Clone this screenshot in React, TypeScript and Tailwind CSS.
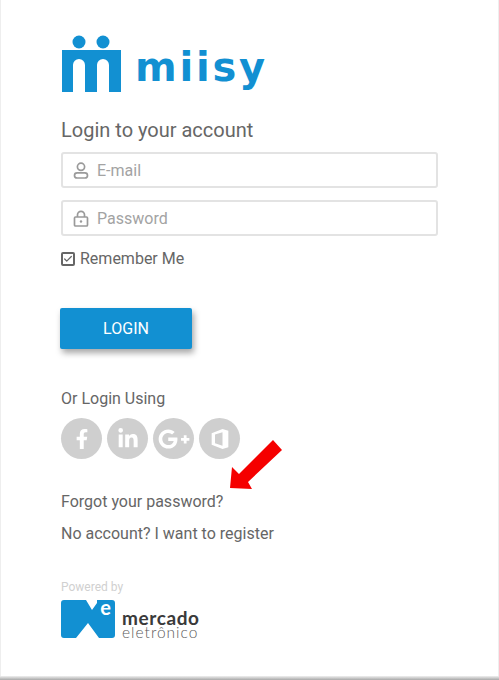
import React from "react";
import { FaFacebookF, FaLinkedinIn, FaGooglePlusG } from "react-icons/fa";
import { Check } from "lucide-react";

const ROBOTO = "font-['Roboto',sans-serif]";

function OfficeIcon() {
  return (
    <svg width="20" height="24" viewBox="0 0 24 26" fill="#fff">
      <path fillRule="evenodd" d="M2 6 15 1 22 3V23L15 25 2 20ZM6 7.5 15 5V21L6 18Z" />
    </svg>
  );
}

function UserIcon() {
  return (
    <svg width="16" height="17" viewBox="0 0 16 17" fill="none" stroke="currentColor" strokeWidth="1.7">
      <circle cx="8" cy="4.8" r="3.6" />
      <rect x="1.5" y="10.8" width="13" height="5.2" rx="2.6" />
    </svg>
  );
}

function LockIcon() {
  return (
    <svg width="16" height="17" viewBox="0 0 16 17" fill="none" stroke="currentColor" strokeWidth="1.7">
      <path d="M4.5 7V4.8a3.5 3.5 0 0 1 7 0V7" />
      <rect x="1.5" y="7" width="13" height="9" rx="1" />
      <circle cx="8" cy="11.5" r="1.2" fill="currentColor" stroke="none" />
    </svg>
  );
}

function MiisyLogo() {
  return (
    <div className="flex items-end h-[57px]">
      <svg width="60" height="57" viewBox="0 0 60 57" className="shrink-0">
        <circle cx="18" cy="7" r="6.5" fill="#1290d2" />
        <circle cx="42" cy="7" r="6.5" fill="#1290d2" />
        <path
          d="M1 15H60V57H48V30a6 6 0 0 0-12 0V57H24V30a6 6 0 0 0-12 0V57H1Z"
          fill="#1290d2"
        />
      </svg>
      <span className="ml-[14px] mb-[5px] font-['DejaVu_Sans',sans-serif] font-bold text-[#1290d2] text-[40px] leading-[40px] tracking-[2.8px]">
        miisy
      </span>
    </div>
  );
}

function Field({ icon, placeholder }: { icon: React.ReactNode; placeholder: string }) {
  return (
    <div className="flex items-center h-[36px] w-[377px] border-2 border-[#e3e3e3] rounded-[3px] bg-white pl-[9px]">
      <span className="w-[17px] flex justify-center text-[#9a9a9a]">{icon}</span>
      <span className="ml-[8px] pt-[1px] text-[16px] text-[#a3a3a3]">{placeholder}</span>
    </div>
  );
}

function Social({ children }: { children: React.ReactNode }) {
  return (
    <div className="w-[41px] h-[41px] rounded-full bg-[#cfcfcf] text-white flex items-center justify-center">
      {children}
    </div>
  );
}

function MercadoLogo() {
  return (
    <div className="flex items-end">
      <div className="relative w-[54px] h-[38px]">
        <svg width="54" height="38" viewBox="0 0 54 38">
          <path
            d="M3 0H25L31 10 36 3V0H51a3 3 0 0 1 3 3V35a3 3 0 0 1-3 3H38L27 23 15 38H3a3 3 0 0 1-3-3V3a3 3 0 0 1 3-3Z"
            fill="#1290d2"
          />
        </svg>
        <span className="absolute right-[4px] top-[-5px] font-['Lato',sans-serif] font-bold text-white text-[20px] leading-[24px]">
          e
        </span>
      </div>
      <div className="ml-[7px] -mb-[1px] flex flex-col font-['Lato',sans-serif]">
        <span className="text-[19px] leading-[14px] font-bold text-[#3a3a3a] tracking-[0.6px]">mercado</span>
        <span className="text-[15.5px] leading-[14px] font-light text-[#5a5a5a] tracking-[1px]">eletrônico</span>
      </div>
    </div>
  );
}

export default function App() {
  return (
    <div className={`${ROBOTO} relative w-[499px] h-[680px] bg-white overflow-hidden flex flex-col`}>
      <main className="flex-1 pl-[60px] pt-[35px] border-l border-r border-[#eeeeee]">
        <MiisyLogo />

        <h1 className="mt-[24px] text-[20px] leading-[28px] text-[#666]">Login to your account</h1>

        <div className="mt-[8px] flex flex-col gap-[12px]">
          <Field icon={<UserIcon />} placeholder="E-mail" />
          <Field icon={<LockIcon />} placeholder="Password" />
        </div>

        <label className="mt-[13px] flex items-center text-[16px] leading-[20px] text-[#666]">
          <span className="w-[14px] h-[14px] border-2 border-[#666] rounded-[2px] flex items-center justify-center">
            <Check size={10} strokeWidth={3} />
          </span>
          <span className="ml-[5px]">Remember Me</span>
        </label>

        <button className="mt-[39px] -ml-[1px] block w-[132px] h-[41px] pt-[1px] rounded-[2px] bg-[#1290d2] text-white text-[16px] font-normal shadow-[2px_4px_6px_rgba(0,0,0,0.35)]">
          LOGIN
        </button>

        <p className="mt-[40px] text-[16px] leading-[20px] text-[#666]">Or Login Using</p>

        <div className="mt-[9px] flex gap-[5px]">
          <Social><FaFacebookF size={20} /></Social>
          <Social><FaLinkedinIn size={22} /></Social>
          <Social><FaGooglePlusG size={32} /></Social>
          <Social><OfficeIcon /></Social>
        </div>

        <p className="mt-[33px] text-[16px] leading-[20px] text-[#666]">Forgot your password?</p>
        <p className="mt-[12px] text-[16px] leading-[20px] text-[#666]">No account? I want to register</p>

        <p className="mt-[35px] text-[12px] leading-[16px] text-[#d0d0d0]">Powered by</p>
        <div className="mt-[5px]">
          <MercadoLogo />
        </div>
      </main>

      <div className="h-[4px] bg-gradient-to-b from-[#f0f0f0] to-[#a8a8a8]" />

      {/* red annotation arrow */}
      <svg className="absolute left-0 top-0 pointer-events-none" width="499" height="680">
        <polygon points="230,488 232,467 239,474 273,440 282,450 248,482 252,489" fill="#f50000" />
      </svg>
    </div>
  );
}
